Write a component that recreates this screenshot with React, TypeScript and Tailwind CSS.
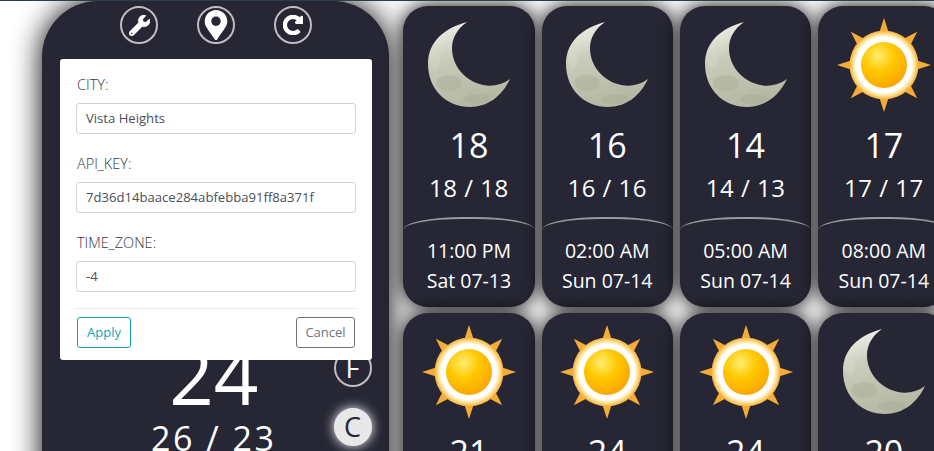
import type { ReactNode } from "react"
import { FaWrench, FaMapMarkerAlt, FaRedoAlt } from "react-icons/fa"

type Forecast = { icon: "moon" | "sun"; temp: number; range?: string; time?: string; date?: string }

const forecasts: Forecast[] = [
  { icon: "moon", temp: 18, range: "18 / 18", time: "11:00 PM", date: "Sat 07-13" },
  { icon: "moon", temp: 16, range: "16 / 16", time: "02:00 AM", date: "Sun 07-14" },
  { icon: "moon", temp: 14, range: "14 / 13", time: "05:00 AM", date: "Sun 07-14" },
  { icon: "sun", temp: 17, range: "17 / 17", time: "08:00 AM", date: "Sun 07-14" },
  { icon: "sun", temp: 21 },
  { icon: "sun", temp: 24 },
  { icon: "sun", temp: 24 },
  { icon: "moon", temp: 20 },
]

const moonPath =
  "M48 7 C25 13 9 27 9 49 C9 75 28 92 51 92 C69 92 83 81 91 64 C83 70 73 72 64 70 C46 66 33 51 33 33 C33 23 38 14 48 7 Z"

function Moon() {
  return (
    <svg viewBox="0 0 100 100" className="h-[100px] w-[100px]">
      <defs>
        <linearGradient id="moonFill" x1="0.3" y1="0" x2="0.6" y2="1">
          <stop offset="0" stopColor="#eff0e9" />
          <stop offset="0.35" stopColor="#c9cdbb" />
          <stop offset="1" stopColor="#b2b7a2" />
        </linearGradient>
        <clipPath id="moonClip">
          <path d={moonPath} />
        </clipPath>
      </defs>
      <path d={moonPath} fill="url(#moonFill)" />
      {/* mottled surface */}
      <g clipPath="url(#moonClip)" fill="#a9ae98" opacity="0.45">
        <ellipse cx="30" cy="68" rx="13" ry="8" />
        <ellipse cx="58" cy="84" rx="14" ry="5" />
        <ellipse cx="16" cy="44" rx="5" ry="9" fill="#d8dacd" />
      </g>
    </svg>
  )
}

function Sun() {
  const rays = [0, 45, 90, 135, 180, 225, 270, 315]
  return (
    <svg viewBox="0 0 100 100" className="h-[100px] w-[100px]">
      <defs>
        <radialGradient id="sunCore" cx="0.38" cy="0.3" r="0.75">
          <stop offset="0" stopColor="#ffee70" />
          <stop offset="0.45" stopColor="#ffc800" />
          <stop offset="1" stopColor="#f9a400" />
        </radialGradient>
        <radialGradient id="sunRing">
          <stop offset="0.8" stopColor="#ffffff" />
          <stop offset="0.9" stopColor="#ffdf8c" />
          <stop offset="1" stopColor="#f5ac36" />
        </radialGradient>
      </defs>
      {rays.map((r) => (
        <polygon key={r} points="44.5,20 50,3 55.5,20" fill="#f5ac36" transform={`rotate(${r} 50 50)`} />
      ))}
      <circle cx="50" cy="50" r="34.5" fill="url(#sunRing)" />
      <circle cx="50" cy="50" r="23" fill="url(#sunCore)" />
    </svg>
  )
}

function Card({ item }: { item: Forecast }) {
  return (
    <div className="flex h-[301px] w-[131.3px] shrink-0 flex-col rounded-[25px] bg-[#262635] text-white shadow-[0_0_20px_#000]">
      <div className="flex h-[106px] shrink-0 items-center justify-center pt-[12px]">
        {item.icon === "moon" ? <Moon /> : <Sun />}
      </div>
      <div className="mt-[11px] text-center text-[34px] leading-[44px]">{item.temp}</div>
      {item.range && (
        <>
          <div className="mt-[6px] text-center text-[24px] leading-[30px] tracking-[0.5px]">{item.range}</div>
          <div className="mt-[14px] flex-1 rounded-t-[60px_13px] rounded-b-[25px] border-t-2 border-[#9a9aa2] pt-[17px] text-center text-[19.5px]">
            <div className="leading-[30px]">{item.time}</div>
            <div className="leading-[30px]">{item.date}</div>
          </div>
        </>
      )}
    </div>
  )
}

function RoundButton({ children, className }: { children: ReactNode; className: string }) {
  return (
    <div className={`flex h-[38px] w-[38px] items-center justify-center rounded-full border-2 ${className}`}>
      {children}
    </div>
  )
}

function Field({ label, value }: { label: string; value: string }) {
  return (
    <div>
      <div className="mb-[8px] pl-[1px] text-[14.5px] leading-[21px] font-light text-[#333a40]">{label}</div>
      <div className="flex h-[31px] items-center rounded-[3px] border border-[#ced4da] px-[9px] text-[13.1px] text-[#495057]">
        {value}
      </div>
    </div>
  )
}

const outline = "border-[#bdbdc2] text-white"

export default function App() {
  return (
    <div className="relative flex h-[451px] w-[934px] overflow-hidden border-t border-[#2c3e4a] bg-white font-['Open_Sans',sans-serif]">
      <div className="ml-[42px] flex h-[600px] w-[347px] shrink-0 flex-col rounded-t-[56px] bg-[#262635] shadow-[0_0_30px_#000]">
        <div className="flex justify-center gap-[39px] pt-[5px] pl-[1px]">
          <RoundButton className={outline}><FaWrench size={21} stroke="currentColor" strokeWidth={12} /></RoundButton>
          <RoundButton className={outline}><FaMapMarkerAlt size={30} /></RoundButton>
          <RoundButton className={outline}><FaRedoAlt size={20} stroke="currentColor" strokeWidth={30} /></RoundButton>
        </div>
        <div className="mt-[291px] flex">
          <div className="flex-1 pl-[52px] text-center text-white">
            <div className="text-[78px] leading-[80px]">24</div>
            <div className="mt-[1px] text-[34px] leading-[44px] tracking-[2.5px]">26 / 23</div>
          </div>
          <div className="mr-[17.5px] flex flex-col gap-[21px] pt-[14px]">
            <RoundButton className={`${outline} text-[27px]`}>F</RoundButton>
            <RoundButton className="border-[#e8e8e8] bg-[#e8e8e8] text-[27px] text-[#262635] shadow-[0_0_12px_#fff]">C</RoundButton>
          </div>
        </div>
      </div>

      <div className="ml-[14.3px] flex w-[560px] shrink-0 flex-wrap content-start gap-x-[7px] gap-y-[6px] pt-[5px]">
        {forecasts.map((f, i) => (
          <Card key={i} item={f} />
        ))}
      </div>

      {/* settings dialog */}
      <div className="absolute top-[58px] left-[60px] h-[301px] w-[312px] rounded-[3px] bg-white px-[16px] pt-[15px]">
        <div className="mb-[16px] flex flex-col gap-[19px]">
          <Field label="CITY:" value="Vista Heights" />
          <Field label="API_KEY:" value="7d36d14baace284abfebba91ff8a371f" />
          <Field label="TIME_ZONE:" value="-4" />
        </div>
        <div className="flex justify-between border-t border-[#e9ecef] px-[1px] pt-[8px]">
          <button className="h-[31px] w-[54px] rounded-[3px] border border-[#17a2b8] text-[13px] text-[#17a2b8]">Apply</button>
          <button className="h-[31px] w-[59px] rounded-[3px] border border-[#6c757d] text-[13px] text-[#6c757d]">Cancel</button>
        </div>
      </div>
    </div>
  )
}
